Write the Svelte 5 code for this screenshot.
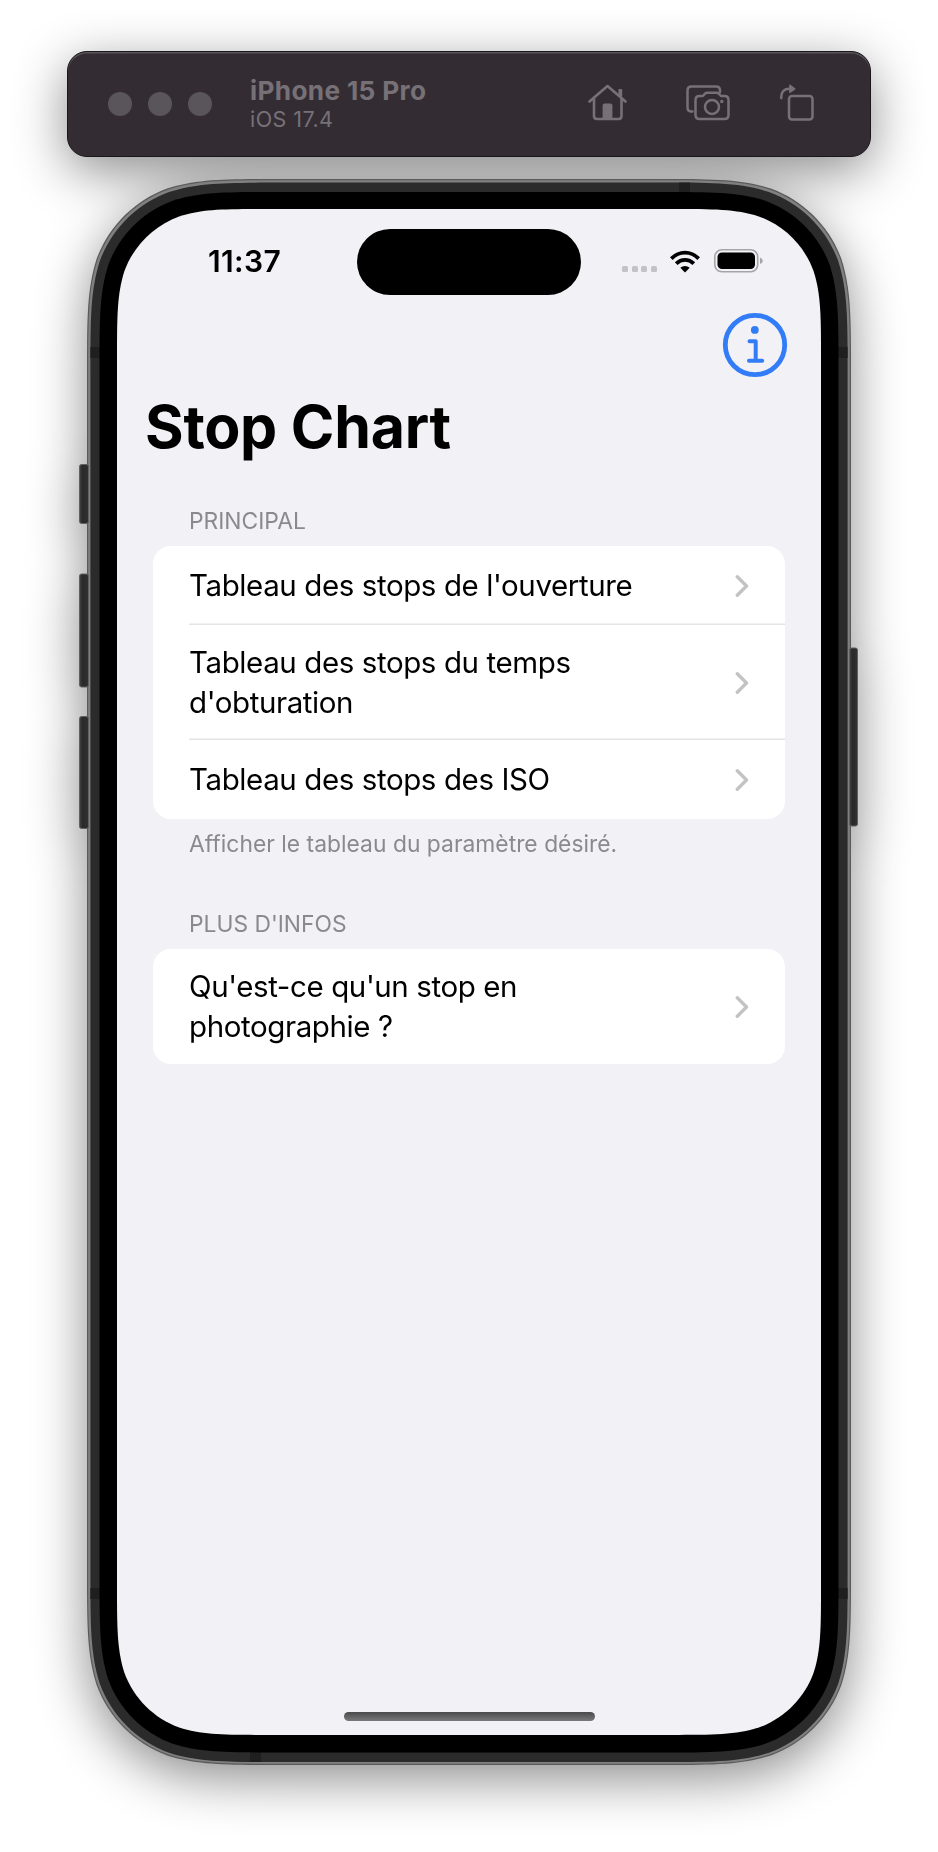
<script>
  const sections = [
    {
      header: 'PRINCIPAL',
      rows: [
        ["Tableau des stops de l'ouverture"],
        ['Tableau des stops du temps', "d'obturation"],
        ['Tableau des stops des ISO']
      ],
      footer: 'Afficher le tableau du paramètre désiré.'
    },
    {
      header: "PLUS D'INFOS",
      rows: [["Qu'est-ce qu'un stop en", 'photographie ?']]
    }
  ];

  // Rounded rectangle with continuous-curvature corners.
  function squircle(x, y, w, h, r) {
    const a = 1.528665 * r, b = 1.088493 * r, c = 0.868407 * r;
    const d = 0.631494 * r, e = 0.074911 * r, f = 0.372824 * r, g = 0.16906 * r;
    const R = x + w, B = y + h;
    return `M${x + a} ${y}H${R - a}
      C${R - b} ${y} ${R - c} ${y} ${R - d} ${y + e}
      C${R - f} ${y + g} ${R - g} ${y + f} ${R - e} ${y + d}
      C${R} ${y + c} ${R} ${y + b} ${R} ${y + a}
      V${B - a}
      C${R} ${B - b} ${R} ${B - c} ${R - e} ${B - d}
      C${R - g} ${B - f} ${R - f} ${B - g} ${R - d} ${B - e}
      C${R - c} ${B} ${R - b} ${B} ${R - a} ${B}
      H${x + a}
      C${x + b} ${B} ${x + c} ${B} ${x + d} ${B - e}
      C${x + f} ${B - g} ${x + g} ${B - f} ${x + e} ${B - d}
      C${x} ${B - c} ${x} ${B - b} ${x} ${B - a}
      V${y + a}
      C${x} ${y + b} ${x} ${y + c} ${x + e} ${y + d}
      C${x + g} ${y + f} ${x + f} ${y + g} ${x + d} ${y + e}
      C${x + c} ${y} ${x + b} ${y} ${x + a} ${y}Z`;
  }

  const sideButtons = [
    { x: -8, y: 285, w: 10, h: 60 },
    { x: -8, y: 394.5, w: 10, h: 114 },
    { x: -8, y: 537, w: 10, h: 113 },
    { x: 762, y: 468.5, w: 9, h: 179 }
  ];
</script>

<div class="simulator">
  <header class="toolbar">
    <div class="lights"><i></i><i></i><i></i></div>
    <div class="device">
      <strong>iPhone 15 Pro</strong>
      <span>iOS 17.4</span>
    </div>
    <div class="tools">
      <svg width="40" height="38" viewBox="0 0 40 38" fill="none" stroke="#777177" stroke-width="2.6" stroke-linecap="round" stroke-linejoin="round">
        <path d="M1.5 18.5 19.5 3 37.5 18.5M6 15.5V33q0 3 3 3h21.500q3 0 3-3V15.500" />
        <path d="M15.500 36V22.500q0-1 1-1h6q1 0 1 1V36zM31.300 7h2v6.500l-2-2z" fill="#777177" stroke-width="1.800" />
      </svg>
      <svg width="44" height="38" viewBox="0 0 44 38" fill="none" stroke="#777177" stroke-width="2.5" stroke-linecap="round" stroke-linejoin="round">
        <path d="M6.500 28.500H5.500Q1.500 28.500 1.500 24.500V7.500Q1.500 3.500 5.500 3.500H30Q34 3.500 34 7.500V9" />
        <path d="M9.500 17q0-4 4-4h3.300l2.200-2.300q1-.9 2.300-.9h9.200q1.300 0 2.300.9l2.200 2.300H38.500q4 0 4 4v15q0 4-4 4h-25q-4 0-4-4z" />
        <circle cx="26" cy="24" r="7" />
        <circle cx="35.800" cy="18.500" r="1.700" fill="#777177" stroke="none" />
      </svg>
      <svg width="34" height="38" viewBox="0 0 34 38" fill="none" stroke="#777177" stroke-width="2.500" stroke-linecap="round" stroke-linejoin="round">
        <rect x="9" y="13" width="23.500" height="23.500" rx="3" />
        <path d="M1.300 15.200C.800 8.500 4.500 5.500 10 5.800" />
        <path d="M9.800 2 15 5.900 9.800 9.500z" fill="#777177" stroke-width="1.200" />
      </svg>
    </div>
  </header>

  <main class="phone">
    <svg class="frame" width="764" height="1586" viewBox="0 0 764 1586">
      <defs>
        <linearGradient id="key" x1="0" x2="1" y1="0" y2="0">
          <stop offset="0" stop-color="#444" /><stop offset=".35" stop-color="#292929" /><stop offset="1" stop-color="#303030" />
        </linearGradient>
      </defs>
      <path d={squircle(0, 0, 764, 1586, 127)} fill="#5a5a5a" />
      <path d={squircle(1.2, 1.2, 761.6, 1583.6, 126)} fill="#808080" />
      <path d={squircle(3.4, 3.6, 757.2, 1579.4, 124.500)} fill="#2b2b2b" />
      <g fill="#1f1f1f">
        <rect x="3.400" y="168" width="10" height="11" /><rect x="750.600" y="168" width="10" height="11" />
        <rect x="3.400" y="1409" width="10" height="11" /><rect x="750.600" y="1409" width="10" height="11" />
        <rect x="592" y="3.600" width="11" height="10" /><rect x="163" y="1573" width="11" height="10" />
      </g>
      <path d={squircle(12.5, 13, 739, 1560.5, 116)} fill="#000" />
      <path d={squircle(30, 30, 704, 1526, 98.500)} fill="#f2f1f6" />
      {#each sideButtons as b}
        <rect x={b.x + 0.500} y={b.y + 0.500} width={b.w - 1} height={b.h - 1} rx="2" fill="url(#key)" stroke="#606060" stroke-width="1" />
      {/each}
    </svg>

    <div class="screen">
      <div class="status">
        <time>11:37</time>
        <div class="island"></div>
        <div class="indicators">
          <span class="signal"><i></i><i></i><i></i><i></i></span>
          <svg class="wifi" width="30" height="23" viewBox="0 0 30 23" fill="none" stroke="#000" stroke-width="3.800">
            <path d="M1.300 8.600Q7.300 2.600 15 2.600T28.700 8.600" />
            <path d="M6.200 13.600Q10 9.900 15 9.900T23.800 13.600" />
            <path d="M15 22.500 10.300 17.800Q12.300 16 15 16T19.700 17.800Z" fill="#000" stroke="none" />
          </svg>
          <svg width="50" height="24" viewBox="0 0 50 24">
            <rect x=".8" y=".8" width="42.900" height="22" rx="7" fill="none" stroke="#a5a5a8" stroke-width="1.600" />
            <rect x="3.500" y="3.500" width="37.500" height="16.600" rx="4.500" fill="#000" />
            <path d="M46 8.500Q48.800 9.700 48.800 11.800T46 15.100Z" fill="#a5a5a8" />
          </svg>
        </div>
      </div>

      <div class="nav">
        <svg width="66" height="66" viewBox="0 0 66 66" fill="none" stroke="#327cf7" stroke-linecap="round" stroke-linejoin="round">
          <circle cx="33" cy="33" r="29.700" stroke-width="4.800" />
          <circle cx="32.800" cy="17.900" r="3.900" fill="#327cf7" stroke="none" />
          <path d="M27.500 29.200H33.700V48.600M27 48.700H40.200" stroke-width="4" />
        </svg>
      </div>

      <h1>Stop Chart</h1>

      {#each sections as section}
        <section>
          <h2>{section.header}</h2>
          <div class="card">
            {#each section.rows as lines}
              <div class="row">
                <div class="label">
                  {#each lines as line}<div>{line}</div>{/each}
                </div>
                <svg width="14" height="24" viewBox="0 0 14 24" fill="none" stroke="#c3c3c5" stroke-width="3.400" stroke-linecap="round" stroke-linejoin="round">
                  <path d="M2.300 2.800 11.500 12 2.300 21.200" />
                </svg>
              </div>
            {/each}
          </div>
          {#if section.footer}<p>{section.footer}</p>{/if}
        </section>
      {/each}

      <div class="home"></div>
    </div>
  </main>
</div>

<style>
  :global(body) {
    background: #fff;
  }
  .simulator {
    box-sizing: border-box;
    width: 938px;
    height: 1852px;
    padding: 51px 67px 0;
    display: flex;
    flex-direction: column;
    gap: 22px;
    font-family: Inter, 'Liberation Sans', sans-serif;
    filter: drop-shadow(0 14px 26px rgba(0, 0, 0, 0.45));
  }
  .toolbar {
    box-sizing: border-box;
    height: 106px;
    flex: none;
    display: flex;
    align-items: center;
    padding: 0 56px 0 40px;
    background: #332d33;
    border: 1px solid #1a171a;
    border-radius: 20px;
    box-shadow: inset 0 1.500px 0 #5a555b;
  }
  .lights {
    display: flex;
    gap: 16px;
    margin-right: 38px;
  }
  .lights i {
    width: 24px;
    height: 24px;
    border-radius: 50%;
    background: #5a545b;
  }
  .device {
    display: flex;
    flex-direction: column;
    color: #777177;
    white-space: nowrap;
  }
  .device strong {
    font-size: 26.200px;
    line-height: 30px;
    font-weight: 700;
    letter-spacing: 0.350px;
  }
  .device span {
    font-size: 21.500px;
    line-height: 27px;
    letter-spacing: 0.450px;
  }
  .tools {
    display: flex;
    margin-left: auto;
    margin-bottom: 5px;
    gap: 58px;
  }
  .tools svg:last-child {
    margin-left: -8px;
  }
  .phone {
    position: relative;
    width: 764px;
    height: 1586px;
    margin-left: 20px;
    flex: none;
  }
  .frame {
    position: absolute;
    inset: 0;
    overflow: visible;
  }
  .screen {
    position: relative;
    box-sizing: border-box;
    margin-left: 30px;
    padding-top: 50px;
    width: 704px;
    height: 1556px;
    display: flex;
    flex-direction: column;
    color: #000;
  }
  .status {
    display: grid;
    grid-template-columns: 240px 224px 240px;
    align-items: center;
    height: 66px;
  }
  time {
    padding: 0 0 2px 91px;
    font-size: 30px;
    font-weight: 600;
    letter-spacing: 0.350px;
  }
  .island {
    height: 66px;
    border-radius: 33px;
    background: #000;
  }
  .indicators {
    display: flex;
    align-items: center;
    padding: 0 0 2px 41px;
  }
  .signal {
    display: flex;
    gap: 3.600px;
    margin: 15px 13px 0 0;
  }
  .signal i {
    width: 6px;
    height: 6px;
    border-radius: 1.500px;
    background: #c3c3c7;
  }
  .wifi {
    margin-right: 14px;
  }
  .nav {
    display: flex;
    justify-content: flex-end;
    height: 66px;
    margin: 17px 33px 0 0;
  }
  h1 {
    margin: 13px 0 0 28px;
    font-size: 59px;
    line-height: 72px;
    font-weight: 700;
    letter-spacing: -0.250px;
  }
  section {
    margin: 52px 36px 0;
  }
  h1 + section {
    margin-top: 44px;
  }
  h2,
  p {
    margin: 0;
    padding-left: 36px;
    font-size: 22.800px;
    line-height: 28px;
    font-weight: 400;
    color: #8a8a8e;
  }
  h2 {
    padding-bottom: 11px;
  }
  p {
    padding-top: 11px;
    letter-spacing: 0.030px;
  }
  .card {
    background: #fff;
    border-radius: 18px;
  }
  .row {
    box-sizing: border-box;
    display: flex;
    align-items: center;
    justify-content: space-between;
    margin-left: 36px;
    padding-right: 36px;
    min-height: 79px;
  }
  .row:has(.label > div + div) {
    min-height: 115px;
  }
  .row + .row {
    box-shadow: 0 -1.500px 0 #e4e4e6;
  }
  .label {
    font-size: 29.500px;
    line-height: 39.400px;
    letter-spacing: -0.400px;
    white-space: nowrap;
  }
  .home {
    width: 251px;
    height: 9px;
    margin: auto auto 14px;
    border-radius: 5px;
    background: linear-gradient(#4a4a4c, #79797c);
  }
</style>
